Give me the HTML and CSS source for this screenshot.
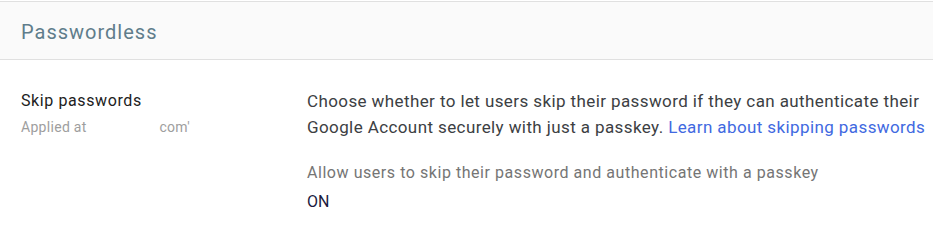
FILE: index.html
```html
<!DOCTYPE html>
<html lang="en">
<head>
    <meta charset="UTF-8">
    <title>Passwordless</title>
    <link rel="stylesheet" href="styles.css">
</head>
<body>
    <div class="panel">
        <div class="panel-header">Passwordless</div>
        <div class="setting-row">
            <div class="setting-label">
                <div class="setting-title">Skip passwords</div>
                <div class="setting-scope">Applied at <span class="redacted"></span>com'</div>
            </div>
            <div class="setting-body">
                <p class="setting-desc">
                    Choose whether to let users skip their password if they can authenticate their
                    Google Account securely with just a passkey.
                    <a href="#" class="learn-link">Learn about skipping passwords</a>
                </p>
                <div class="option-label">Allow users to skip their password and authenticate with a passkey</div>
                <div class="option-value">ON</div>
            </div>
        </div>
    </div>
</body>
</html>
```

FILE: styles.css
```css
/* Painel de configuração */
html, body {
    overflow: hidden;
}
body {
    margin: 0;
    padding-top: 1px;
    font-family: Roboto, Arial, sans-serif;
    background: #ffffff;
    color: #212121;
}
.panel {
    width: 933px;
}
.panel-header {
    background-color: #fafafa;
    border-top: 1px solid #e0e0e0;
    border-bottom: 1px solid #e0e0e0;
    height: 57px;
    line-height: 60px;
    padding-left: 21px;
    font-size: 20px;
    letter-spacing: 1px;
    color: #607d8b;
}
.setting-row {
    display: flex;
    padding-top: 28px;
}
.setting-label {
    flex-shrink: 0;
    width: 286px;
    padding-left: 21px;
}
.setting-title {
    font-size: 16px;
    line-height: 26px;
    letter-spacing: 0.6px;
    color: #212121;
}
.setting-scope {
    font-size: 14px;
    line-height: 26px;
    letter-spacing: 0.3px;
    color: #9e9e9e;
}
.redacted {
    display: inline-block;
    width: 69px;
}
.setting-body {
    flex: 1;
}
.setting-desc {
    margin: 0;
    font-size: 17px;
    line-height: 26px;
    letter-spacing: 0.4px;
    color: #3c4043;
}
.learn-link {
    color: #4169e1;
    text-decoration: none;
}
.option-label {
    margin-top: 20px;
    font-size: 16px;
    line-height: 26px;
    letter-spacing: 0.55px;
    color: #757575;
}
.option-value {
    margin-top: 3px;
    font-size: 16px;
    line-height: 26px;
    color: #1a1a40;
}
```
